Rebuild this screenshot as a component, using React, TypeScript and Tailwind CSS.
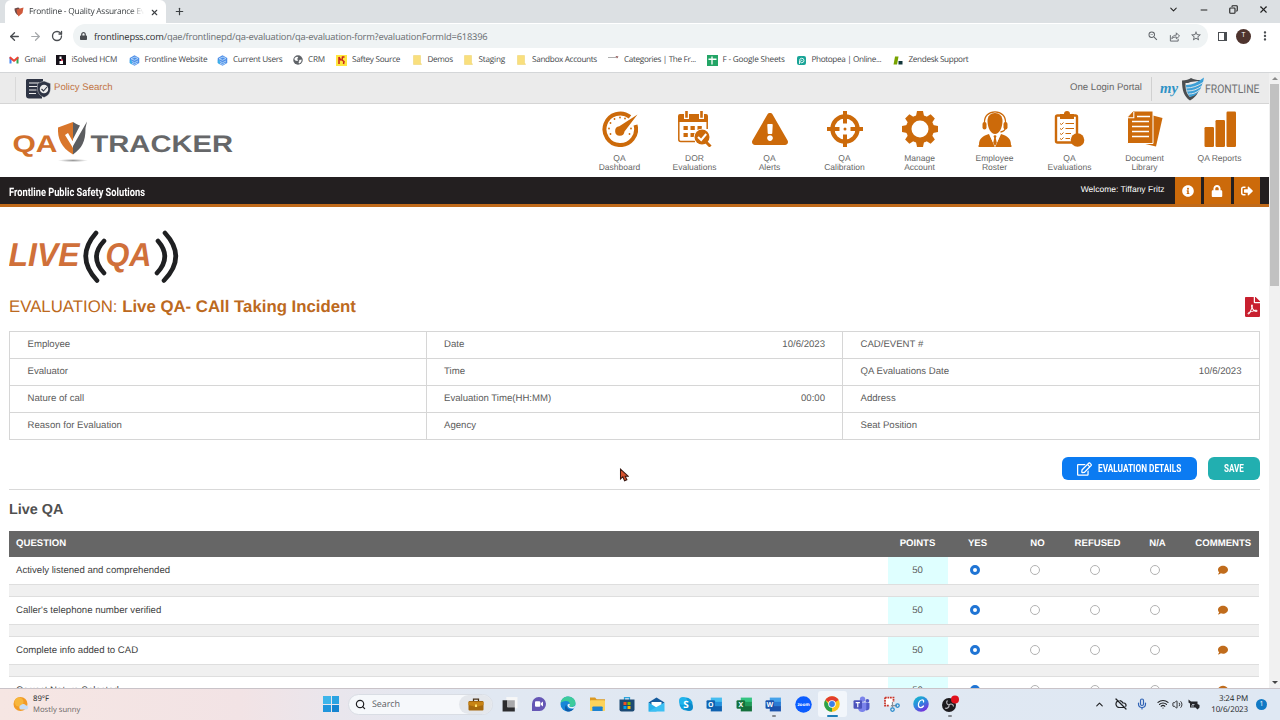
import type { ReactNode } from 'react';
import {
  FaComment,
  FaExclamationTriangle,
  FaFilePdf,
  FaInfoCircle,
  FaLock,
  FaRegEdit,
  FaSignOutAlt,
} from 'react-icons/fa';
import { MdMoreVert, MdStarBorder, MdZoomOut } from 'react-icons/md';
import {
  ArrowLeft,
  ArrowRight,
  ChevronDown,
  ChevronUp,
  CloudOff,
  Copy,
  Mic,
  Minus,
  Plus,
  RotateCw,
  Search,
  Volume2,
  Wifi,
  X,
} from 'lucide-react';

const ORANGE = '#cc6a0a';

/* ---------- browser chrome ---------- */

function ShieldFavicon() {
  return (
    <svg viewBox="0 0 20 20" className="h-[10px] w-[10px] shrink-0">
      <path d="M1 3 8 1l3 1-2 15C3 14 1 8 1 3z" fill="#6b4a48" />
      <path d="M5 5 19 1 17 12 9 19 6 12z" fill="#cf5a3c" />
    </svg>
  );
}

function TabStrip() {
  return (
    <div className="flex h-[23px] shrink-0 bg-[#dce0e3] pl-[5px] text-[#3c4043]">
      <div className="flex w-[161px] items-center rounded-t-[6px] bg-white pl-[9px] pt-px">
        <ShieldFavicon />
        <div className="ml-[5px] w-[115px] overflow-hidden whitespace-nowrap text-[8.4px] tracking-[-0.23px] [mask-image:linear-gradient(to_right,black_88%,transparent)]">
          Frontline - Quality Assurance Ev
        </div>
        <X className="ml-[6px] h-[9px] w-[9px]" strokeWidth={3} />
      </div>
      <Plus className="ml-[8px] mt-[6px] h-[11px] w-[11px]" strokeWidth={2.6} />
      <div className="ml-auto flex h-[19px] items-center gap-[20px] pr-[11px] text-[#222]">
        <ChevronDown className="h-[11px] w-[11px]" strokeWidth={2.2} />
        <Minus className="h-[10px] w-[10px]" strokeWidth={2.4} />
        <Copy className="h-[9px] w-[9px] -scale-x-100" strokeWidth={3} />
        <X className="h-[11px] w-[11px]" strokeWidth={2.4} />
      </div>
    </div>
  );
}

function Toolbar() {
  return (
    <div className="flex h-[26px] shrink-0 items-center bg-white text-[#4a4d51]">
      <ArrowLeft className="ml-[8px] h-[13px] w-[13px]" strokeWidth={2.5} />
      <ArrowRight className="ml-[8px] h-[13px] w-[13px] text-[#a5a8ab]" strokeWidth={2.2} />
      <RotateCw className="ml-[9px] h-[12px] w-[12px]" strokeWidth={2.7} />
      <div className="ml-[10px] flex h-[24px] w-[1135px] items-center rounded-full bg-[#eff3f4] pl-[7px] pr-[6px]">
        <FaLock className="h-[8px] w-[7px]" />
        <div className="ml-[7px] whitespace-nowrap pt-px text-[9.3px] tracking-[-0.195px] text-[#686c70]">
          <span className="text-[#2b2d30]">frontlinepss.com</span>
          /qae/frontlinepd/qa-evaluation/qa-evaluation-form?evaluationFormId=618396
        </div>
        <div className="ml-auto flex items-center gap-[10px] text-[#5f6368]">
          <MdZoomOut className="h-[12px] w-[12px]" />
          <svg viewBox="0 0 24 24" className="h-[11px] w-[11px]" fill="none" stroke="currentColor" strokeWidth="2">
            <path d="M3 9v13h17v-5M6 17c1-6 5-8 10-8V4l7 7-7 6v-4c-4 0-7 1-10 4z" />
          </svg>
          <MdStarBorder className="h-[12px] w-[12px]" />
        </div>
      </div>
      <div className="ml-[10px] h-[9px] w-[9px] border-[1.5px] border-r-[3.5px] border-[#4a4d51]" />
      <div className="ml-[9px] flex h-[15px] w-[15px] items-center justify-center rounded-full bg-[#4e342e] text-[7px] text-white">
        T
      </div>
      <MdMoreVert className="ml-[7px] h-[14px] w-[14px]" />
    </div>
  );
}

function Globe3d() {
  return (
    <svg viewBox="0 0 22 22" className="h-[11px] w-[11px]">
      <path d="M11 .5 20.500 6v10L11 21.500 1.500 16V6z" fill="#4f8ee8" />
      <path d="M4 7.500 12 4l6 3-7 3.500zM4 12l7 3.500L18 12M5 16l6 3 6-3" fill="none" stroke="#c9e8fb" strokeWidth="1.500" />
      <path d="M1.500 9 6 12v7l-4.500-3z" fill="#35b5e8" opacity=".8" />
    </svg>
  );
}

function FolderMark() {
  return (
    <svg viewBox="0 0 18 20" className="h-[10px] w-[9px]">
      <path d="M1 1h14v14l2 4H1z" fill="#f9df7d" stroke="#ecd06a" />
    </svg>
  );
}

const bookmarks: { label: string; box: string; icon: ReactNode }[] = [
  {
    label: 'Gmail',
    box: 'w-[47px] tracking-[-0.25px]',
    icon: (
      <svg viewBox="0 0 20 16" className="h-[8px] w-[10px]">
        <path d="M1 15V2l4 3v10z" fill="#4285f4" />
        <path d="M15 15V5l4-3v13z" fill="#34a853" />
        <path d="m1 2 2-1 7 6 7-6 2 1v3l-9 7-9-7z" fill="#ea4335" />
      </svg>
    ),
  },
  {
    label: 'iSolved HCM',
    box: 'w-[73px] tracking-[-0.2px]',
    icon: (
      <svg viewBox="0 0 20 20" className="h-[10px] w-[10px]">
        <path d="M0 0h20v20H0z" fill="#16121a" />
        <path d="M7 3h4v5l3 4v6H7v-6h3V8H7z" fill="#fff" />
        <path d="M10 8h3v4h-3z" fill="#e6395d" />
      </svg>
    ),
  },
  { label: 'Frontline Website', box: 'w-[88.5px] tracking-[-0.24px]', icon: <Globe3d /> },
  { label: 'Current Users', box: 'w-[75px] tracking-[-0.3px]', icon: <Globe3d /> },
  {
    label: 'CRM',
    box: 'w-[44px] tracking-[-0.2px]',
    icon: (
      <svg viewBox="0 0 20 20" className="h-[10px] w-[10px]">
        <circle cx="10" cy="10" r="9.500" fill="#5f6368" />
        <path d="M2.500 8c2-4 5-5 7-4l1 2-3 2 3 2-2 2-4-1zM12 10l5-1c1 4-2 7-5 8l-1-3 2-2z" fill="#fff" />
      </svg>
    ),
  },
  {
    label: 'Saftey Source',
    box: 'w-[75.500px] tracking-[-0.29px]',
    icon: (
      <svg viewBox="0 0 22 22" className="h-[11px] w-[11px]">
        <path d="M0 0h22v22H0z" fill="#ffe73d" />
        <path d="M6 4v14M6 4l4 7M17 4h-4l-1 6 4 3-1 5" fill="none" stroke="#c8251d" strokeWidth="3" />
      </svg>
    ),
  },
  { label: 'Demos', box: 'w-[51px] tracking-[-0.35px]', icon: <FolderMark /> },
  { label: 'Staging', box: 'w-[53.500px] tracking-[-0.2px]', icon: <FolderMark /> },
  { label: 'Sandbox Accounts', box: 'w-[92px] tracking-[-0.33px]', icon: <FolderMark /> },
  {
    label: 'Categories | The Fr...',
    box: 'w-[98.500px] tracking-[-0.35px]',
    icon: (
      <svg viewBox="0 0 22 20" className="h-[10px] w-[11px]">
        <path d="M0 5h16" stroke="#999" strokeWidth="1.600" />
        <path d="m15 2 6 1-3 4z" fill="#8b5050" />
      </svg>
    ),
  },
  {
    label: 'F - Google Sheets',
    box: 'w-[89px] tracking-[-0.2px]',
    icon: (
      <svg viewBox="0 0 22 22" className="h-[11px] w-[11px]">
        <path d="M0 0h22v22H0z" fill="#23a566" />
        <path d="M3 8.500h16M10 3v16" stroke="#fff" strokeWidth="2.600" />
      </svg>
    ),
  },
  {
    label: 'Photopea | Online...',
    box: 'w-[97px] tracking-[-0.37px]',
    icon: (
      <svg viewBox="0 0 18 18" className="h-[9px] w-[9px]">
        <rect width="18" height="18" rx="4" fill="#18a497" />
        <path d="M5 16V9a4.500 4.500 0 1 1 5 4.500a2.500 2.500 0 1 1 1-4" fill="none" stroke="#fff" strokeWidth="1.700" />
      </svg>
    ),
  },
  {
    label: 'Zendesk Support',
    box: 'w-[90px] tracking-[-0.35px]',
    icon: (
      <svg viewBox="0 0 20 18" className="h-[9px] w-[10px]">
        <path d="M4 1h7L8 17H1z" fill="#78a300" />
        <path d="M11 10h8v7h-8z" fill="#12363a" />
      </svg>
    ),
  },
];

function BookmarksBar() {
  return (
    <div className="flex h-[24px] shrink-0 items-center border-b border-[#d4d6d8] bg-white pl-[8.500px] text-[8.200px] text-[#45484b]">
      {bookmarks.map((b) => (
        <div key={b.label} className={`flex shrink-0 items-center whitespace-nowrap ${b.box}`}>
          <span className="mr-[5px] flex w-[11px] shrink-0 justify-center">{b.icon}</span>
          {b.label}
        </div>
      ))}
    </div>
  );
}

/* ---------- page header ---------- */

function UtilityBar() {
  return (
    <div className="flex h-[31px] shrink-0 items-center border-b border-[#d5d5d5] bg-[#ebebeb] pt-px text-[9.600px]">
      <div className="ml-[15px] h-[24px] w-px bg-[#d9d9d9]" />
      <svg viewBox="0 0 50 40" className="ml-[10px] h-[20px] w-[25px]">
        <path d="M2 0h32v6l-9 4v10c0 6 3 11 7 14v5H6a6 6 0 0 1-6-6V2z" fill="#2e3444" />
        <path d="M6 8h20M6 15h16M6 22h15M6 29h14" stroke="#ebebeb" strokeWidth="2.400" />
        <path d="m36 4 13 5v10c0 9-5 15-13 18-8-3-13-9-13-18V9z" fill="#2e3444" stroke="#ebebeb" strokeWidth=".8" />
        <circle cx="36" cy="20" r="8.500" fill="#ebebeb" />
        <path d="m31 20 4 4 7-8" fill="none" stroke="#2e3444" strokeWidth="2.200" />
      </svg>
      <span className="ml-[3px] text-[#c27545]">Policy Search</span>
      <span className="ml-auto text-[#666]">One Login Portal</span>
      <div className="ml-[9px] h-[24px] w-px bg-[#d0d0d0]" />
      <svg viewBox="0 0 102 26" className="ml-[7px] mr-[8px] h-[26px] w-[102px] overflow-visible">
        <text x="1" y="17" fontFamily="Liberation Serif, serif" fontStyle="italic" fontWeight="700" fontSize="15" fill="#2f93c6" textLength="18" lengthAdjust="spacingAndGlyphs">
          my
        </text>
        <path d="M23 4.500c4 0 7-1 9-2.500 3 1.500 5 2 9 2 0 10-2 16-10 20.500-6-4-8-10-8-20z" fill="#4a4d50" />
        <path d="M26.500 7c2 0 3.500 0 5-1l8-1c0 7-2 12-8.500 16-4-4-4.500-8-4.500-14z" fill="#ebebeb" />
        <path d="M27 9c7 0 12-3 18-7.500-.5 3-1 5-2 7-.5 3-2 5-3.500 7-2 3-5 5-8.500 5.500-2.500-3-4-7-4-12z" fill="#3c9fd6" />
        <path d="M27 12c6 0 12-2 17-5.500M28 15c6 0 10-1.500 15-5M29.500 18c4 0 8-1 11-4" fill="none" stroke="#ebebeb" strokeWidth=".9" />
        <text x="46" y="17" fontFamily="Roboto, sans-serif" fontSize="12" fill="#6f7173" textLength="54.500" lengthAdjust="spacingAndGlyphs">
          FRONTLINE
        </text>
      </svg>
    </div>
  );
}

function QaTrackerLogo() {
  return (
    <svg viewBox="0 0 230 50" className="ml-[8px] mt-[14px] h-[50px] w-[230px]">
      <defs>
        <radialGradient id="ground">
          <stop offset="0" stopColor="#999" />
          <stop offset="1" stopColor="#fff" />
        </radialGradient>
      </defs>
      <g fontFamily="Liberation Sans, sans-serif" fontWeight="700" fontSize="24">
        <text x="4.500" y="34" fill="#d2702c" textLength="45" lengthAdjust="spacingAndGlyphs">
          QA
        </text>
        <text x="82.500" y="34" fill="#666769" textLength="142.500" lengthAdjust="spacingAndGlyphs">
          TRACKER
        </text>
      </g>
      <path d="M65 4 50 9.500c-.5 11 3 20 15 27z" fill="#d9762b" />
      <path d="M65 4c3 2 5 3 7 3.500L65 21z" fill="#5c5d60" />
      <path d="m57 17 3-2 4.500 8L76 5l3-1.500L65 30z" fill="#fff" />
      <path d="M79 3.500 65 28v8.500C74 30 77.500 24 77.500 10z" fill="#5c5d60" />
      <ellipse cx="65" cy="42.500" rx="15" ry="1.600" fill="url(#ground)" />
    </svg>
  );
}

function NavIcon({ children }: { children: ReactNode }) {
  return (
    <svg viewBox="0 0 36 36" className="h-[36px] w-[36px]" fill={ORANGE}>
      {children}
    </svg>
  );
}

const navItems: { label: string; icon: ReactNode }[] = [
  {
    label: 'QA\nDashboard',
    icon: (
      <NavIcon>
        <path d="M28 5.800A15.800 15.800 0 1 0 33.500 14" fill="none" stroke={ORANGE} strokeWidth="4" />
        <path d="M35.500 3.500 22.500 20.500a4.700 4.700 0 1 1-5.200-5.200z" />
        <g>
          <circle cx="18" cy="6.500" r=".9" />
          <circle cx="12.500" cy="8" r=".9" />
          <circle cx="8.500" cy="12" r=".9" />
          <circle cx="7" cy="17.500" r=".9" />
          <circle cx="8.500" cy="23" r=".9" />
          <circle cx="23" cy="7.500" r=".9" />
          <circle cx="29" cy="17.500" r=".9" />
          <circle cx="27.500" cy="23" r=".9" />
        </g>
      </NavIcon>
    ),
  },
  {
    label: 'DOR\nEvaluations',
    icon: (
      <NavIcon>
        <path d="M3 3h4v5h5V3h10v5h5V3h2a2 2 0 0 1 2 2v6H1V5a2 2 0 0 1 2-2z" />
        <path d="M8.200 0h2.600v6.800H8.200zM23.200 0h2.600v6.800h-2.600z" />
        <path d="M1.800 10v18.500a2 2 0 0 0 2 2H18M30.200 10v8" fill="none" stroke={ORANGE} strokeWidth="1.500" />
        <path d="M6.500 15h4.300v4H6.500zM13.500 15h4.300v4h-4.300zM20.500 15h4.300v4h-4.300zM6.500 22h4.300v4H6.500zM13.500 22h4.300v4h-4.300z" />
        <circle cx="25" cy="26" r="8.300" fill="#fff" />
        <circle cx="25" cy="26" r="7.500" />
        <path d="m29 31 4.500 4.500" stroke={ORANGE} strokeWidth="3" />
        <path d="m21 26 3.200 3 5-6" fill="none" stroke="#fff" strokeWidth="2" />
      </NavIcon>
    ),
  },
  { label: 'QA\nAlerts', icon: <FaExclamationTriangle className="h-[36px] w-[36px]" color={ORANGE} /> },
  {
    label: 'QA\nCalibration',
    icon: (
      <NavIcon>
        <circle cx="18" cy="18" r="12.600" fill="none" stroke={ORANGE} strokeWidth="4.200" />
        <path d="M16 0h4v12.500h-4zM16 23.500h4V36h-4zM0 16h12.500v4H0zM23.500 16H36v4H23.500z" />
        <circle cx="18" cy="18" r="1.500" />
      </NavIcon>
    ),
  },
  {
    label: 'Manage\nAccount',
    icon: (
      <NavIcon>
        <g>
          <path d="M14 5 15 0h6l1 5v26l-1 5h-6l-1-5z" />
          <path d="M14 5 15 0h6l1 5v26l-1 5h-6l-1-5z" transform="rotate(45 18 18)" />
          <path d="M14 5 15 0h6l1 5v26l-1 5h-6l-1-5z" transform="rotate(90 18 18)" />
          <path d="M14 5 15 0h6l1 5v26l-1 5h-6l-1-5z" transform="rotate(135 18 18)" />
        </g>
        <circle cx="18" cy="18" r="14" />
        <circle cx="18" cy="18" r="8.500" fill="#fff" />
      </NavIcon>
    ),
  },
  {
    label: 'Employee\nRoster',
    icon: (
      <NavIcon>
        <path d="M10.500 10c0-5 3-8 7.500-8s7.500 3 7.500 8c0 7-3.500 13-7.500 13S10.500 17 10.500 10z" />
        <path d="M7.500 12C7 5 12 .8 18 .8S29 5 28.500 12M28.500 16c0 3-2 4.500-5 5" fill="none" stroke={ORANGE} strokeWidth="1.300" />
        <rect x="5.500" y="11" width="4" height="7.500" rx="2" />
        <rect x="26.500" y="11" width="4" height="7.500" rx="2" />
        <path d="M2 34c0-7 4-9 10-11l6 13H3a1 1 0 0 1-1-2zM34 34c0-7-4-9-10-11l-6 13h15a1 1 0 0 0 1-2z" />
        <path d="m12.500 23.500 3.500 2.500h4l3.500-2.500L18 36z" fill="#fff" />
        <path d="m16.500 25 1.500-1 1.500 1-.7 2 1 5-1.800 3-1.800-3 1-5z" />
      </NavIcon>
    ),
  },
  {
    label: 'QA\nEvaluations',
    icon: (
      <NavIcon>
        <rect x="4" y="4.500" width="21" height="27" rx="1.500" fill="#fff" stroke={ORANGE} strokeWidth="2.400" />
        <path d="M8 3h4a3 3 0 0 1 6 0h4v5H8z" />
        <path d="M13.500 12.500H22M13.500 17.500H22M13.500 22.500H19M13.500 27.500H18" stroke={ORANGE} strokeWidth="1.200" />
        <path d="m8 12.500 1.500 1 2-2M8 17.500l1.500 1 2-2M8 22.500l1.500 1 2-2M8 27.500l1.500 1 2-2" fill="none" stroke={ORANGE} strokeWidth="1" />
        <circle cx="25.500" cy="29" r="6.800" />
      </NavIcon>
    ),
  },
  {
    label: 'Document\nLibrary',
    icon: (
      <NavIcon>
        <path d="M26 4.500 35.500 7 29 35.500 14 32z" />
        <path d="M6 0h20v32.500H.5V6z" stroke="#fff" />
        <path d="M6.800 1v5.800H1" fill="none" stroke="#fff" strokeWidth="1.100" />
        <path d="M10 5.500h13M5 10.500h17M5 15.500h17M5 20.500h17M5 25.500h17" stroke="#fff" strokeWidth="1.400" />
      </NavIcon>
    ),
  },
  {
    label: 'QA Reports',
    icon: (
      <NavIcon>
        <rect x="2.500" y="16" width="9.500" height="20" rx="1.200" />
        <rect x="13.500" y="9" width="9.500" height="27" rx="1.200" />
        <rect x="24.500" y="0.500" width="9.500" height="35.500" rx="1.200" />
      </NavIcon>
    ),
  },
];

function Header() {
  return (
    <div className="flex h-[73px] shrink-0 bg-white">
      <QaTrackerLogo />
      <nav className="ml-auto mr-[12px] flex pt-[7px]">
        {navItems.map((item) => (
          <div key={item.label} className="flex w-[75px] flex-col items-center">
            {item.icon}
            <span className="mt-[6.500px] whitespace-pre-line text-center text-[8.500px] leading-[9.300px] text-[#666]">
              {item.label}
            </span>
          </div>
        ))}
      </nav>
    </div>
  );
}

function AccountBar() {
  return (
    <div className="flex h-[30px] shrink-0 border-b-[3px] border-[#c06a1a] bg-[#231f20] text-white">
      <span className="ml-[9px] mt-[6px] origin-left scale-x-[0.806] whitespace-nowrap font-['Roboto'] text-[11.500px] font-bold leading-[18px]">
        Frontline Public Safety Solutions
      </span>
      <span className="ml-auto mt-[4px] text-[8.500px] leading-[16px]">Welcome: Tiffany Fritz</span>
      <div className="ml-[10px] mr-[9px] flex gap-[3px]">
        {[FaInfoCircle, FaLock, FaSignOutAlt].map((Icon, i) => (
          <div key={i} className="flex h-[27px] w-[26.500px] items-center justify-center bg-[#cc6a0a]">
            <Icon className="h-[12px] w-[12px]" />
          </div>
        ))}
      </div>
    </div>
  );
}

/* ---------- evaluation form ---------- */

function LiveQaLogo() {
  return (
    <svg viewBox="0 0 172 56" className="mt-[22px] h-[56px] w-[172px]">
      <g fontFamily="Liberation Sans, sans-serif" fontWeight="700" fontStyle="italic" fontSize="33" fill="#d0703a">
        <text x="-.5" y="37" textLength="71" lengthAdjust="spacingAndGlyphs">
          LIVE
        </text>
        <text x="96.500" y="37" textLength="46" lengthAdjust="spacingAndGlyphs">
          QA
        </text>
      </g>
      <path
        d="M87 4Q66 28 88 51.500M95 12Q80 28 95 44M149 12Q163 28 148 44M156 4Q178 28 155 51.500"
        fill="none"
        stroke="#1f2022"
        strokeWidth="4.600"
        strokeLinecap="round"
      />
    </svg>
  );
}

const details = [
  ['Employee', '', 'Date', '10/6/2023', 'CAD/EVENT #', ''],
  ['Evaluator', '', 'Time', '', 'QA Evaluations Date', '10/6/2023'],
  ['Nature of call', '', 'Evaluation Time(HH:MM)', '00:00', 'Address', ''],
  ['Reason for Evaluation', '', 'Agency', '', 'Seat Position', ''],
];

function DetailsTable() {
  return (
    <div className="mt-[12px] w-[1250.500px] border-b border-l border-[#d6d6d6] text-[9.600px] text-[#5c5c5c]">
      {details.map((row) => (
        <div key={row[0]} className="grid h-[27px] grid-cols-3 border-t border-[#d6d6d6]">
          {[0, 2, 4].map((i) => (
            <div key={i} className="flex items-center justify-between border-r border-[#d6d6d6] pl-[17.500px] pr-[17px]">
              <span>{row[i]}</span>
              <span>{row[i + 1]}</span>
            </div>
          ))}
        </div>
      ))}
    </div>
  );
}

const COLS = 'grid grid-cols-[878.5px_60px_60px_60px_60px_60px_71.5px]';

const questions = [
  'Actively listened and comprehended',
  "Caller's telephone number verified",
  'Complete info added to CAD',
  'Correct Nature Selected',
];

function Radio({ checked }: { checked?: boolean }) {
  return (
    <div className="flex items-center justify-center pr-[5px]">
      <span
        className={
          checked
            ? 'h-[10px] w-[10px] rounded-full border-[3px] border-[#1f74d4] bg-white'
            : 'h-[10px] w-[10px] rounded-full border border-[#b2b2b2] bg-white'
        }
      />
    </div>
  );
}

function QuestionTable() {
  return (
    <div className="mt-[10.500px] w-[1250px] shrink-0 text-[9.600px]">
      <div className={`${COLS} h-[26px] items-center bg-[#666] pt-px text-center font-bold text-white`}>
        <span className="pl-[7px] text-left">QUESTION</span>
        <span>POINTS</span>
        <span>YES</span>
        <span>NO</span>
        <span>REFUSED</span>
        <span>N/A</span>
        <span>COMMENTS</span>
      </div>
      {questions.map((q) => (
        <div key={q}>
          <div className={`${COLS} h-[27.500px]`}>
            <span className="flex items-center pl-[7px] pt-px text-[#3f3f3f]">{q}</span>
            <span className="flex items-center justify-center bg-[#dfffff] pt-px text-[#5c5c5c]">50</span>
            <Radio checked />
            <Radio />
            <Radio />
            <Radio />
            <span className="flex items-center justify-center pr-px">
              <FaComment className="h-[10px] w-[10px] text-[#c06c1c]" />
            </span>
          </div>
          <div className="h-[12.500px] border-y border-[#dedede] bg-[#f0f0f0]" />
        </div>
      ))}
    </div>
  );
}

function Evaluation() {
  return (
    <div className="flex flex-col pl-[9px]">
      <LiveQaLogo />
      <div className="mt-[11px] flex w-[1251px] items-center justify-between pb-px">
        <h1 className="text-[16.800px] leading-[22px] text-[#bc6920]">
          EVALUATION: <b>Live QA- CAll Taking Incident</b>
        </h1>
        <FaFilePdf className="h-[20px] w-[15px] text-[#c8202f]" />
      </div>
      <DetailsTable />
      <div className="mt-[17px] flex w-[1251px] justify-end gap-[11px] font-['Roboto'] text-[10.500px] font-bold text-white">
        <button className="flex h-[23px] w-[135px] items-center rounded-[6px] bg-[#0b7bf2] pl-[15px]">
          <FaRegEdit className="h-[14px] w-[15px] shrink-0" />
          <span className="ml-[6px] origin-left scale-x-[0.785] whitespace-nowrap pt-px">EVALUATION DETAILS</span>
        </button>
        <button className="flex h-[23px] w-[52px] items-center justify-center rounded-[6px] bg-[#22afb0]">
          <span className="scale-x-[0.77] pt-px">SAVE</span>
        </button>
      </div>
      <div className="mt-[9px] h-px w-[1251px] bg-[#d9d9d9]" />
      <h2 className="mt-[10px] text-[14.400px] font-bold leading-[20px] text-[#505050]">Live QA</h2>
      <QuestionTable />
    </div>
  );
}

function Scrollbar() {
  return (
    <div className="flex w-[11px] shrink-0 flex-col items-center bg-[#f1f1f1]">
      <div className="mt-[4px] border-x-[3px] border-b-[3px] border-x-transparent border-b-[#8a8a8a]" />
      <div className="mt-[4px] h-[202px] w-[9px] bg-[#c1c1c1]" />
      <div className="mb-[4px] mt-auto border-x-[3px] border-t-[3px] border-x-transparent border-t-[#444]" />
    </div>
  );
}

function Cursor() {
  return (
    <svg viewBox="0 0 16 24" className="absolute left-[619px] top-[468px] h-[14px] w-[10px]">
      <path d="M2 2v17l4-4 3 7 4-2-3-6h5z" fill="#d9532f" stroke="#3a1a14" strokeWidth="1.800" />
    </svg>
  );
}

/* ---------- taskbar ---------- */

function OfficeTile({ letter, dark, mid, light }: { letter: string; dark: string; mid: string; light: string }) {
  return (
    <svg viewBox="0 0 32 32" className="h-[17px] w-[17px]">
      <path d="M9 3h21v9H9z" fill={light} />
      <path d="M9 11h21v9H9z" fill={mid} />
      <path d="M9 19h21v10H9z" fill={dark} />
      <rect x="1" y="8" width="16" height="16" rx="2" fill={dark} />
      <text x="9" y="21" textAnchor="middle" fontFamily="Open Sans, sans-serif" fontSize="13" fontWeight="700" fill="#fff">
        {letter}
      </text>
    </svg>
  );
}

const apps: { name: string; icon: ReactNode }[] = [
  {
    name: 'taskview',
    icon: (
      <svg viewBox="0 0 32 32" className="h-[17px] w-[17px]">
        <path d="M10 2h21v21H10z" fill="#f7f7f7" />
        <path d="M3 8h9v13h14v8H3z" fill="#2c2c2e" />
        <path d="M12 8h14v13H12z" fill="#a9a9ab" />
      </svg>
    ),
  },
  {
    name: 'chat',
    icon: (
      <svg viewBox="0 0 32 32" className="h-[16px] w-[16px]">
        <path d="M2 30V16A14 14 0 1 1 17 30z" fill="#6556b5" />
        <rect x="8" y="10.500" width="10.500" height="11" rx="2" fill="#fff" />
        <path d="m19.500 14.500 4.500-3.500v10l-4.500-3.500z" fill="#fff" />
      </svg>
    ),
  },
  {
    name: 'edge',
    icon: (
      <svg viewBox="0 0 32 32" className="h-[16px] w-[16px]">
        <circle cx="16" cy="16" r="15" fill="#1787d8" />
        <path d="M1 14C3 5 9 1 16 1c9 0 15 6 15 13 0 5-4 8-8 8-5 0-5-3-3-5 0-5-4-7-8-7-6 0-9 2-11 4z" fill="#3ccb9c" />
        <path d="M13 17c-1 8 6 12 14 9-3 4-7 5-11 5C9 31 8 22 13 17z" fill="#0d5aa8" />
        <path d="M20 17c-2 2-2 5 3 5 4 0 6-1 8-4l-2 6c-6 3-13 0-14-5 0-3 4-5 5-2z" fill="#e8f2f8" />
      </svg>
    ),
  },
  {
    name: 'explorer',
    icon: (
      <svg viewBox="0 0 34 32" className="h-[15px] w-[17px]">
        <path d="M1 1h11l3 4h18v10H1z" fill="#dc9a22" />
        <rect x="1" y="7" width="32" height="23" rx="1.500" fill="#fcd35b" />
        <path d="M8 20h18a2 2 0 0 1 2 2v8H6v-8a2 2 0 0 1 2-2z" fill="#1c82d1" />
      </svg>
    ),
  },
  {
    name: 'store',
    icon: (
      <svg viewBox="0 0 32 32" className="h-[16px] w-[16px]">
        <path d="M11 8V3h10v5" fill="none" stroke="#2ba4dd" strokeWidth="2.500" />
        <path d="M1 7h30v20a4 4 0 0 1-4 4H5a4 4 0 0 1-4-4z" fill="#1c4a74" />
        <path d="M9 12h6v6H9z" fill="#f25022" />
        <path d="M17 12h6v6h-6z" fill="#7fba00" />
        <path d="M9 20h6v6H9z" fill="#00a4ef" />
        <path d="M17 20h6v6h-6z" fill="#ffb900" />
      </svg>
    ),
  },
  {
    name: 'mail',
    icon: (
      <svg viewBox="0 0 34 30" className="h-[15px] w-[17px]">
        <path d="M1 11 17 1l16 10-16 12z" fill="#155a9c" />
        <path d="M7 10h20v8l-10 5-10-5z" fill="#fff" />
        <path d="m1 11 16 10v8H1z" fill="#2bb1ea" />
        <path d="m33 11-32 18h32z" fill="#3cc0f3" />
      </svg>
    ),
  },
  {
    name: 'skype',
    icon: (
      <svg viewBox="0 0 32 32" className="h-[16px] w-[16px]">
        <circle cx="16" cy="16" r="13" fill="#10a0dd" />
        <circle cx="10" cy="10" r="8" fill="#22b4ec" />
        <circle cx="22" cy="22" r="8" fill="#0b8acb" />
        <text x="16" y="23" textAnchor="middle" fontFamily="Open Sans, sans-serif" fontSize="20" fontWeight="700" fill="#fff">
          S
        </text>
      </svg>
    ),
  },
  { name: 'outlook', icon: <OfficeTile letter="O" dark="#0f62b0" mid="#2490dc" light="#45bdf0" /> },
  { name: 'excel', icon: <OfficeTile letter="X" dark="#14713c" mid="#1f9a58" light="#35c481" /> },
  { name: 'word', icon: <OfficeTile letter="W" dark="#1a53ad" mid="#2a7bd3" light="#45a2ea" /> },
  {
    name: 'zoom',
    icon: (
      <svg viewBox="0 0 32 32" className="h-[17px] w-[17px]">
        <circle cx="16" cy="16" r="15.500" fill="#0b5cff" />
        <text x="16" y="19" textAnchor="middle" fontFamily="Open Sans, sans-serif" fontSize="8.500" fontWeight="700" fill="#fff">
          zoom
        </text>
      </svg>
    ),
  },
  {
    name: 'chrome',
    icon: (
      <svg viewBox="0 0 32 32" className="h-[16px] w-[16px]">
        <circle cx="16" cy="16" r="15.500" fill="#fbc51d" />
        <path d="M16 16 2.600 8.200a15.500 15.500 0 0 1 26.800 0z" fill="#e23c2e" />
        <path d="M16 16v15.500A15.500 15.500 0 0 1 2.600 8.200L11 19z" fill="#2ba24c" />
        <path d="M16 31.500 22 19l-6-3z" fill="#fbc51d" />
        <circle cx="16" cy="16" r="7.500" fill="#fff" />
        <circle cx="16" cy="16" r="5.800" fill="#3c7fe8" />
      </svg>
    ),
  },
  {
    name: 'teams',
    icon: (
      <svg viewBox="0 0 32 32" className="h-[17px] w-[17px]">
        <circle cx="27" cy="9" r="3.500" fill="#5059c9" />
        <circle cx="18" cy="6" r="5" fill="#7b83eb" />
        <path d="M22 13h9v9a5 5 0 0 1-8 4z" fill="#5059c9" />
        <path d="M10 12h15v11a8 8 0 0 1-15 3z" fill="#7b83eb" />
        <rect x="1" y="8" width="16" height="16" rx="2" fill="#4b53bc" />
        <path d="M5 12.500h8M9 12.500V21" stroke="#fff" strokeWidth="2.200" />
      </svg>
    ),
  },
  {
    name: 'snip',
    icon: (
      <svg viewBox="0 0 34 32" className="h-[16px] w-[17px]">
        <path d="M4 3h17v16H4z" fill="#fff" />
        <path d="M4 3h17v9M4 3v16h9" fill="none" stroke="#c9372c" strokeWidth="3.500" strokeDasharray="3.500 1.500" />
        <path d="M19 12v11M16 19h12" stroke="#8a8f98" strokeWidth="2.500" />
        <circle cx="19" cy="27" r="3.500" fill="none" stroke="#2a8ccc" strokeWidth="2.500" />
        <circle cx="29" cy="19" r="3.500" fill="none" stroke="#2a8ccc" strokeWidth="2.500" />
      </svg>
    ),
  },
  {
    name: 'canva',
    icon: (
      <svg viewBox="0 0 32 32" className="h-[16px] w-[16px]">
        <defs>
          <linearGradient id="canva" x1="0" y1="0" x2="0.600" y2="1">
            <stop offset="0" stopColor="#0fc3c9" />
            <stop offset="0.550" stopColor="#2f86e0" />
            <stop offset="1" stopColor="#7432dc" />
          </linearGradient>
        </defs>
        <circle cx="16" cy="16" r="15.500" fill="url(#canva)" />
        <path d="M21 12c1-3-1-5-4-4-5 1-7 8-6 12s6 5 10 0" fill="none" stroke="#fff" strokeWidth="2.500" strokeLinecap="round" />
      </svg>
    ),
  },
  {
    name: 'obs',
    icon: (
      <svg viewBox="0 0 36 36" className="h-[18px] w-[18px]">
        <circle cx="16" cy="20" r="14" fill="#1d1b1f" />
        <path d="M16 20c-5-1-6-6-3-9M16 20c4-4 9-1 9 3M16 20c1 5-4 8-8 6" fill="none" stroke="#bdbcc2" strokeWidth="2.200" />
        <circle cx="28" cy="9" r="8" fill="#e0101c" />
      </svg>
    ),
  },
];

function AppButton({ name, icon }: { name: string; icon: ReactNode }) {
  return (
    <div
      className={`relative flex h-[26px] w-[29.400px] items-center justify-center ${name === 'chrome' ? 'rounded-[3px] bg-[#f2f6fb]' : ''}`}
    >
      {icon}
      {name === 'chrome' && <i className="absolute bottom-0 h-[2px] w-[11px] rounded-full bg-[#1f7eb8]" />}
      {(name === 'word' || name === 'obs') && (
        <i className="absolute bottom-0 h-[2px] w-[4px] rounded-full bg-[#85898f]" />
      )}
    </div>
  );
}

function Taskbar() {
  return (
    <div className="flex h-[32px] shrink-0 items-center border-t border-[#c9c3c8] bg-[linear-gradient(to_right,#f6e6e3_0px,#f2e3e5_240px,#e9e6ed_340px,#e1e8f2_480px,#dfe8f3_1280px)] pb-px text-[7.700px] text-[#202124]">
      <svg viewBox="0 0 32 32" className="ml-[13px] h-[16px] w-[16px]">
        <circle cx="15" cy="16" r="14" fill="#f29b26" />
        <circle cx="12" cy="12" r="9" fill="#f7b63c" />
        <path d="M15 27a5 5 0 0 1 1-9 6 6 0 0 1 10 1 4 4 0 0 1 1 8z" fill="#c9def5" />
      </svg>
      <div className="ml-[4px] w-[60px] whitespace-nowrap pt-px leading-[10.500px]">
        <div>89°F</div>
        <div className="text-[#6b6668]">Mostly sunny</div>
      </div>
      <div className="ml-[230px] grid h-[16px] w-[16px] grid-cols-2 gap-[1px]">
        <i className="bg-[#3eb5ea]" />
        <i className="bg-[#2ba3e2]" />
        <i className="bg-[#2096dc]" />
        <i className="bg-[#1584d0]" />
      </div>
      <div className="ml-[9px] flex h-[21px] w-[145px] items-center rounded-full border border-[#d9dde4] bg-[#f6f8fb] pl-[6px]">
        <Search className="h-[11px] w-[11px]" strokeWidth={2.6} />
        <span className="ml-[6px] text-[9px] tracking-[-0.1px] text-[#5c6066]">Search</span>
        <span className="ml-auto flex h-[19px] w-[33px] items-center justify-center rounded-full bg-[#e4e7ec]">
          <svg viewBox="0 0 32 26" className="h-[13px] w-[16px]">
            <path d="M11 7V2h10v5" fill="none" stroke="#4a3216" strokeWidth="2.500" />
            <rect x="1" y="6" width="30" height="19" rx="2" fill="#a5680e" />
            <path d="M1 8h30v6L16 18 1 14z" fill="#c78315" />
            <path d="M14 13h4v5h-4z" fill="#ffe26a" />
          </svg>
        </span>
      </div>
      <div className="ml-[1.500px] flex">
        {apps.map((app) => (
          <AppButton key={app.name} name={app.name} icon={app.icon} />
        ))}
      </div>
      <div className="ml-auto flex items-center pr-[13px]">
        <ChevronUp className="h-[11px] w-[11px]" strokeWidth={2.4} />
        <CloudOff className="ml-[10px] h-[12px] w-[12px]" strokeWidth={2.4} />
        <Mic className="ml-[9px] h-[12px] w-[12px] text-[#2f62b5]" strokeWidth={2.4} />
        <Wifi className="ml-[9px] h-[12px] w-[12px]" strokeWidth={2.4} />
        <Volume2 className="ml-[3px] h-[11px] w-[11px]" strokeWidth={2} />
        <svg viewBox="0 0 24 22" className="ml-[5px] h-[11px] w-[12px]">
          <path d="M1 1l5 4h13v5l4 2v5l-4 4-4-4H4V9L1 7z" fill="#25262a" />
          <path d="M8 11h5M6 14h6" stroke="#dfe8f3" strokeWidth="1.500" />
        </svg>
        <div className="ml-[7px] w-[41px] whitespace-nowrap pt-px text-right text-[8px] leading-[10.500px] tracking-[-0.12px]">
          <div>3:24 PM</div>
          <div>10/6/2023</div>
        </div>
        <span className="ml-[8px] flex h-[11px] w-[11px] items-center justify-center rounded-full bg-[#1179c4] text-[7px] leading-none text-white">
          1
        </span>
      </div>
    </div>
  );
}

export default function App() {
  return (
    <div className="relative flex h-[720px] w-[1280px] flex-col overflow-hidden bg-white font-['Open_Sans',sans-serif] [text-rendering:geometricPrecision]">
      <TabStrip />
      <Toolbar />
      <BookmarksBar />
      <div className="flex min-h-0 flex-1 font-['Liberation_Sans',Arial,sans-serif]">
        <div className="flex min-w-0 flex-1 flex-col overflow-hidden">
          <UtilityBar />
          <Header />
          <AccountBar />
          <Evaluation />
        </div>
        <Scrollbar />
      </div>
      <Taskbar />
      <Cursor />
    </div>
  );
}
